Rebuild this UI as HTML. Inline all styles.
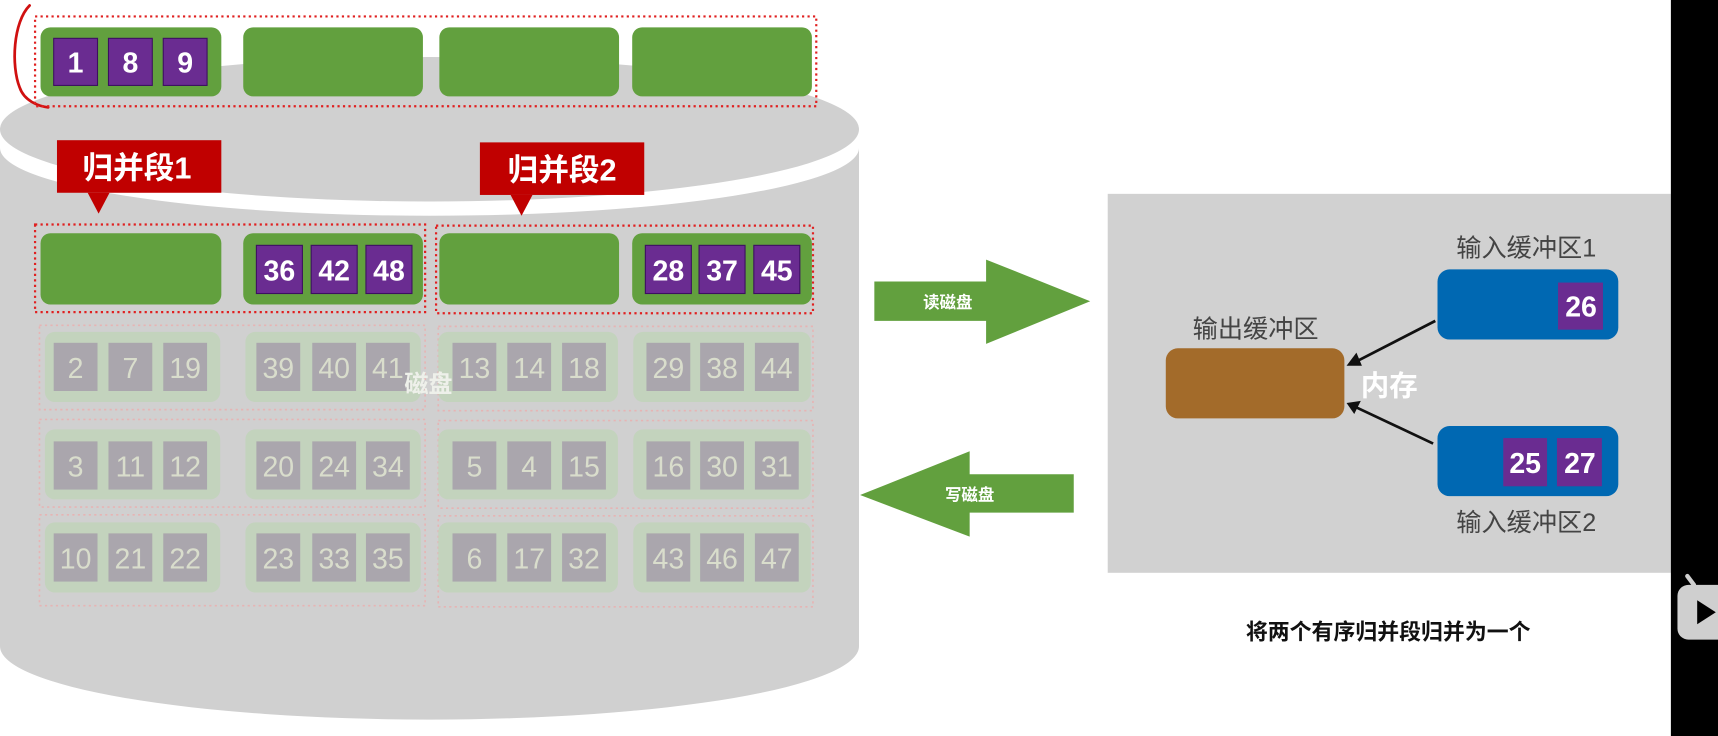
<!DOCTYPE html>
<html><head><meta charset="utf-8"><style>
html,body{margin:0;padding:0;background:#fff;width:1718px;height:736px;overflow:hidden}
svg{display:block}
text{font-family:"Liberation Sans","Noto Sans CJK SC",sans-serif}
</style></head><body>
<svg width="1718" height="736" viewBox="0 0 1568 672" preserveAspectRatio="none" xmlns="http://www.w3.org/2000/svg">
<rect x="0" y="0" width="1568" height="672" fill="#fff"/>
<path d="M0,135 A392,62 0 0 0 784,135 L784,590 A392,67 0 0 1 0,590 Z" fill="#d0d0d0"/>
<ellipse cx="392" cy="118" rx="392" ry="66" fill="#d0d0d0"/>
<path d="M27,5 C12,20 10,60 18,80 C22,92 35,97 44,98" fill="none" stroke="#d01010" stroke-width="2.5" stroke-linecap="round"/>
<rect x="32" y="15" width="713" height="82" fill="none" stroke="#e02020" stroke-width="2" stroke-dasharray="2,3"/>
<g fill="#62a03e">
<rect x="37" y="25" width="165" height="63" rx="9"/><rect x="222" y="25" width="164" height="63" rx="9"/>
<rect x="401" y="25" width="164" height="63" rx="9"/><rect x="577" y="25" width="164" height="63" rx="9"/>
</g>
<g fill="#6a2c91" stroke="#3c1060" stroke-width="1">
<rect x="49" y="35" width="40" height="43"/><rect x="99" y="35" width="40" height="43"/><rect x="149" y="35" width="40" height="43"/>
</g>
<g fill="#fff" font-weight="bold" font-size="26" text-anchor="middle">
<text x="69" y="66">1</text><text x="119" y="66">8</text><text x="169" y="66">9</text>
</g>
<g fill="#c00000">
<rect x="52" y="128" width="150" height="48"/><path d="M80,176 L100,176 L90,195 Z"/>
<rect x="438" y="130" width="150" height="48"/><path d="M466,178 L486,178 L476,197 Z"/>
</g>
<g fill="#fff" font-weight="bold" font-size="28" text-anchor="middle">
<text x="125" y="163">归并段1</text><text x="513" y="165">归并段2</text>
</g>
<rect x="32" y="205" width="356" height="80" fill="none" stroke="#e02020" stroke-width="2" stroke-dasharray="2,3"/>
<rect x="398" y="206" width="344" height="80" fill="none" stroke="#e02020" stroke-width="2" stroke-dasharray="2,3"/>
<g fill="#62a03e">
<rect x="37" y="213" width="165" height="65" rx="9"/><rect x="222" y="213" width="164" height="65" rx="9"/>
<rect x="401" y="213" width="164" height="65" rx="9"/><rect x="577" y="213" width="164" height="65" rx="9"/>
</g>
<g fill="#6a2c91" stroke="#3c1060" stroke-width="1">
<rect x="234" y="224" width="42" height="44"/><rect x="284" y="224" width="42" height="44"/><rect x="334" y="224" width="42" height="44"/>
<rect x="589" y="224" width="42" height="44"/><rect x="638" y="224" width="42" height="44"/><rect x="688" y="224" width="42" height="44"/>
</g>
<g fill="#fff" font-weight="bold" font-size="26" text-anchor="middle">
<text x="255" y="256">36</text><text x="305" y="256">42</text><text x="355" y="256">48</text>
<text x="610" y="256">28</text><text x="659" y="256">37</text><text x="709" y="256">45</text>
</g>
<g fill="none" stroke="#e6b4b4" stroke-width="1.5" stroke-dasharray="2,3">
<rect x="36" y="297" width="352" height="77"/><rect x="400" y="298" width="342" height="77"/>
<rect x="36" y="383" width="352" height="80"/><rect x="400" y="384" width="342" height="80"/>
<rect x="36" y="470" width="352" height="83"/><rect x="400" y="471" width="342" height="83"/>
</g>
<g fill="#c3d3bd">
<rect x="41" y="303" width="160" height="64" rx="9"/><rect x="224" y="303" width="160" height="64" rx="9"/><rect x="400" y="303" width="164" height="64" rx="9"/><rect x="578" y="303" width="162" height="64" rx="9"/>
<rect x="41" y="392" width="160" height="64" rx="9"/><rect x="224" y="392" width="160" height="64" rx="9"/><rect x="400" y="392" width="164" height="64" rx="9"/><rect x="578" y="392" width="162" height="64" rx="9"/>
<rect x="41" y="477" width="160" height="64" rx="9"/><rect x="224" y="477" width="160" height="64" rx="9"/><rect x="400" y="477" width="164" height="64" rx="9"/><rect x="578" y="477" width="162" height="64" rx="9"/>
</g>
<g fill="#aaa6ad">
<rect x="49" y="313" width="40" height="44"/><rect x="99" y="313" width="40" height="44"/><rect x="149" y="313" width="40" height="44"/>
<rect x="234" y="313" width="40" height="44"/><rect x="285" y="313" width="40" height="44"/><rect x="334" y="313" width="40" height="44"/>
<rect x="413" y="313" width="40" height="44"/><rect x="463" y="313" width="40" height="44"/><rect x="513" y="313" width="40" height="44"/>
<rect x="590" y="313" width="40" height="44"/><rect x="639" y="313" width="40" height="44"/><rect x="689" y="313" width="40" height="44"/>
<rect x="49" y="403" width="40" height="44"/><rect x="99" y="403" width="40" height="44"/><rect x="149" y="403" width="40" height="44"/>
<rect x="234" y="403" width="40" height="44"/><rect x="285" y="403" width="40" height="44"/><rect x="334" y="403" width="40" height="44"/>
<rect x="413" y="403" width="40" height="44"/><rect x="463" y="403" width="40" height="44"/><rect x="513" y="403" width="40" height="44"/>
<rect x="590" y="403" width="40" height="44"/><rect x="639" y="403" width="40" height="44"/><rect x="689" y="403" width="40" height="44"/>
<rect x="49" y="487" width="40" height="44"/><rect x="99" y="487" width="40" height="44"/><rect x="149" y="487" width="40" height="44"/>
<rect x="234" y="487" width="40" height="44"/><rect x="285" y="487" width="40" height="44"/><rect x="334" y="487" width="40" height="44"/>
<rect x="413" y="487" width="40" height="44"/><rect x="463" y="487" width="40" height="44"/><rect x="513" y="487" width="40" height="44"/>
<rect x="590" y="487" width="40" height="44"/><rect x="639" y="487" width="40" height="44"/><rect x="689" y="487" width="40" height="44"/>
</g>
<g fill="#d9ddcc" font-size="26" text-anchor="middle">
<text x="69" y="345">2</text><text x="119" y="345">7</text><text x="169" y="345">19</text>
<text x="254" y="345">39</text><text x="305" y="345">40</text><text x="354" y="345">41</text>
<text x="433" y="345">13</text><text x="483" y="345">14</text><text x="533" y="345">18</text>
<text x="610" y="345">29</text><text x="659" y="345">38</text><text x="709" y="345">44</text>
<text x="69" y="435">3</text><text x="119" y="435">11</text><text x="169" y="435">12</text>
<text x="254" y="435">20</text><text x="305" y="435">24</text><text x="354" y="435">34</text>
<text x="433" y="435">5</text><text x="483" y="435">4</text><text x="533" y="435">15</text>
<text x="610" y="435">16</text><text x="659" y="435">30</text><text x="709" y="435">31</text>
<text x="69" y="519">10</text><text x="119" y="519">21</text><text x="169" y="519">22</text>
<text x="254" y="519">23</text><text x="305" y="519">33</text><text x="354" y="519">35</text>
<text x="433" y="519">6</text><text x="483" y="519">17</text><text x="533" y="519">32</text>
<text x="610" y="519">43</text><text x="659" y="519">46</text><text x="709" y="519">47</text>
</g>
<text x="391" y="358" fill="#eef0ea" font-size="22" font-weight="bold" text-anchor="middle">磁盘</text>
<path d="M798,257 L900,257 L900,237 L995,275 L900,314 L900,293 L798,293 Z" fill="#62a03e"/>
<text x="865" y="281" fill="#fff" font-size="15" font-weight="bold" text-anchor="middle">读磁盘</text>
<path d="M785,452 L885,412 L885,433 L980,433 L980,468 L885,468 L885,490 Z" fill="#62a03e"/>
<text x="885" y="457" fill="#fff" font-size="15" font-weight="bold" text-anchor="middle">写磁盘</text>
<rect x="1011" y="177" width="514" height="346" fill="#d1d1d1"/>
<rect x="1064" y="318" width="163" height="64" rx="11" fill="#a36b2a"/>
<text x="1146" y="308" fill="#444" font-size="23" text-anchor="middle">输出缓冲区</text>
<rect x="1312" y="246" width="165" height="64" rx="11" fill="#0068b2"/>
<text x="1393" y="234" fill="#444" font-size="23" text-anchor="middle">输入缓冲区1</text>
<rect x="1312" y="389" width="165" height="64" rx="11" fill="#0068b2"/>
<text x="1393" y="485" fill="#444" font-size="23" text-anchor="middle">输入缓冲区2</text>
<g fill="#6a2c91">
<rect x="1422" y="258" width="41" height="43"/>
<rect x="1372" y="400" width="40" height="44"/><rect x="1421" y="400" width="41" height="44"/>
</g>
<g fill="#fff" font-weight="bold" font-size="26" text-anchor="middle">
<text x="1443" y="289">26</text><text x="1392" y="432">25</text><text x="1442" y="432">27</text>
</g>
<g stroke="#111" stroke-width="2.5">
<line x1="1310" y1="293" x2="1238" y2="330"/><line x1="1308" y1="405" x2="1238" y2="372"/>
</g>
<path d="M1229,334 L1238,322 L1243,334 Z" fill="#111"/>
<path d="M1229,368 L1242,366 L1236,378 Z" fill="#111"/>
<text x="1268" y="361" fill="#fff" font-size="26" font-weight="bold" text-anchor="middle">内存</text>
<text x="1267" y="584" fill="#111" font-size="20" font-weight="bold" text-anchor="middle">将两个有序归并段归并为一个</text>
<rect x="1525" y="0" width="43" height="672" fill="#000"/>
<rect x="1531" y="534" width="50" height="50" rx="10" fill="#cfcfcf"/>
<line x1="1546" y1="534" x2="1540" y2="526" stroke="#cfcfcf" stroke-width="4" stroke-linecap="round"/>
<path d="M1549,548 L1566,559 L1549,570 Z" fill="#000"/>
</svg>
</body></html>
